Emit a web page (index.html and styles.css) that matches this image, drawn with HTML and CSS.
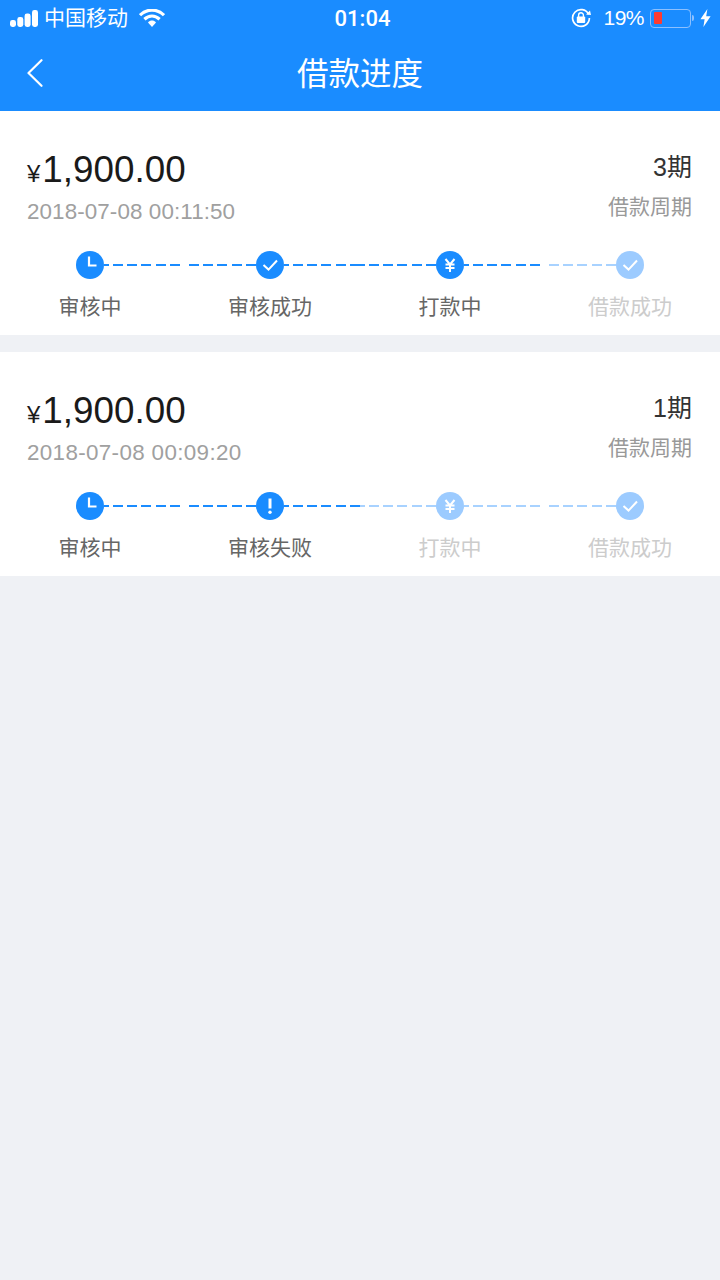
FILE: index.html
```html
<!DOCTYPE html>
<html lang="zh-CN">
<head>
    <meta charset="UTF-8">
    <meta name="viewport" content="width=device-width, initial-scale=1.0">
    <title>借款进度</title>
    <link rel="stylesheet" href="styles.css">
</head>
<body>
    <!-- 顶部蓝色区域 -->
    <header class="top">
        <div class="status-bar">
            <div class="status-left">
                <svg class="signal" width="28" height="17" viewBox="0 0 28 17">
                    <rect x="0" y="10" width="6" height="7" rx="2.4" fill="#fff"/>
                    <rect x="7.3" y="7" width="6" height="10" rx="2.4" fill="#fff"/>
                    <rect x="14.6" y="3.5" width="6" height="13.5" rx="2.4" fill="#fff"/>
                    <rect x="22" y="0" width="6" height="17" rx="2.4" fill="#fff"/>
                </svg>
                <span class="carrier">中国移动</span>
                <svg class="wifi" width="26" height="18" viewBox="0 0 26 18">
                    <path d="M1 6.2 C8 -0.6 18 -0.6 25 6.2" fill="none" stroke="#fff" stroke-width="3.2"/>
                    <path d="M5.4 10.2 C10 6 16 6 20.6 10.2" fill="none" stroke="#fff" stroke-width="3.2"/>
                    <path d="M9 13.4 C11.4 11 14.6 11 17 13.4 L13 18 Z" fill="#fff"/>
                </svg>
            </div>
            <div class="status-time">01:04</div>
            <div class="status-right">
                <svg class="rotate-lock" width="20" height="20" viewBox="0 0 20 20">
                    <path d="M17.6 6.4 A8.4 8.4 0 1 0 18.4 10" fill="none" stroke="#fff" stroke-width="1.7"/>
                    <path d="M15 6.6 L20 7 L19 2.6 Z" fill="#fff"/>
                    <rect x="5.8" y="8.6" width="8.4" height="6.4" rx="1" fill="#fff"/>
                    <path d="M7.6 9 V7.2 A2.4 2.4 0 0 1 12.4 7.2 V9" fill="none" stroke="#fff" stroke-width="1.4"/>
                </svg>
                <span class="percent">19%</span>
                <div class="battery">
                    <div class="battery-body"><div class="battery-level"></div></div>
                    <div class="battery-tip"></div>
                </div>
                <svg class="bolt" width="11" height="18" viewBox="0 0 11 18">
                    <path d="M7.4 0 L0.4 10.2 H4.6 L3.4 18 L10.6 7.2 H6.2 Z" fill="#fff"/>
                </svg>
            </div>
        </div>
        <nav class="nav">
            <svg class="back" width="16" height="28" viewBox="0 0 16 28">
                <path d="M14.5 1.2 L1.5 14 L14.5 26.8" fill="none" stroke="#fff" stroke-width="2.2" stroke-linecap="round" stroke-linejoin="round"/>
            </svg>
            <h1>借款进度</h1>
        </nav>
    </header>

    <!-- 第一笔 -->
    <section class="card">
        <div class="card-head">
            <div>
                <div class="amount"><span class="yen">¥</span>1,900.00</div>
                <div class="date">2018-07-08 00:11:50</div>
            </div>
            <div class="period">
                <div class="period-num">3期</div>
                <div class="period-label">借款周期</div>
            </div>
        </div>
        <div class="track">
            <svg class="node" viewBox="0 0 28 28"><circle cx="14" cy="14" r="14" fill="#1a8cff"/><path d="M13 5.5 V14.5 H20.5" fill="none" stroke="#fff" stroke-width="2.2"/></svg>
            <div class="link"><i class="dash"></i><i class="dash"></i></div>
            <svg class="node" viewBox="0 0 28 28"><circle cx="14" cy="14" r="14" fill="#1a8cff"/><path d="M7.5 14 L12.5 18.6 L21 9.5" fill="none" stroke="#fff" stroke-width="2"/></svg>
            <div class="link tight"><i class="dash"></i><i class="dash"></i></div>
            <svg class="node" viewBox="0 0 28 28"><circle cx="14" cy="14" r="14" fill="#1a8cff"/><path d="M9.5 8 L14 13.5 L18.5 8 M9.5 13.5 H18.5 M9.5 17 H18.5 M14 13.5 V21" fill="none" stroke="#fff" stroke-width="2"/></svg>
            <div class="link"><i class="dash"></i><i class="dash off"></i></div>
            <svg class="node" viewBox="0 0 28 28"><circle cx="14" cy="14" r="14" fill="#9ccbff"/><path d="M7.5 14 L12.5 18.6 L21 9.5" fill="none" stroke="#fff" stroke-width="2"/></svg>
        </div>
        <div class="labels">
            <span>审核中</span>
            <span>审核成功</span>
            <span>打款中</span>
            <span class="off">借款成功</span>
        </div>
    </section>

    <!-- 第二笔 -->
    <section class="card">
        <div class="card-head">
            <div>
                <div class="amount"><span class="yen">¥</span>1,900.00</div>
                <div class="date wide">2018-07-08 00:09:20</div>
            </div>
            <div class="period">
                <div class="period-num">1期</div>
                <div class="period-label">借款周期</div>
            </div>
        </div>
        <div class="track">
            <svg class="node" viewBox="0 0 28 28"><circle cx="14" cy="14" r="14" fill="#1a8cff"/><path d="M13 5.5 V14.5 H20.5" fill="none" stroke="#fff" stroke-width="2.2"/></svg>
            <div class="link"><i class="dash"></i><i class="dash"></i></div>
            <svg class="node" viewBox="0 0 28 28"><circle cx="14" cy="14" r="14" fill="#1a8cff"/><path d="M14 6.5 V16.5" fill="none" stroke="#fff" stroke-width="3"/><circle cx="14" cy="20.2" r="1.7" fill="#fff"/></svg>
            <div class="link tight"><i class="dash"></i><i class="dash off"></i></div>
            <svg class="node" viewBox="0 0 28 28"><circle cx="14" cy="14" r="14" fill="#9ccbff"/><path d="M9.5 8 L14 13.5 L18.5 8 M9.5 13.5 H18.5 M9.5 17 H18.5 M14 13.5 V21" fill="none" stroke="#fff" stroke-width="2"/></svg>
            <div class="link"><i class="dash off"></i><i class="dash off"></i></div>
            <svg class="node" viewBox="0 0 28 28"><circle cx="14" cy="14" r="14" fill="#9ccbff"/><path d="M7.5 14 L12.5 18.6 L21 9.5" fill="none" stroke="#fff" stroke-width="2"/></svg>
        </div>
        <div class="labels">
            <span>审核中</span>
            <span>审核失败</span>
            <span class="off">打款中</span>
            <span class="off">借款成功</span>
        </div>
    </section>
</body>
</html>
```

FILE: styles.css
```css
/* Reset */
html, body {
    margin: 0;
    padding: 0;
}

body {
    width: 720px;
    min-height: 1280px;
    background: #eff1f5;
    font-family: "Liberation Sans", "Noto Sans CJK SC", sans-serif;
    color: #1a1a1a;
}

/* Header */
.top {
    height: 111px;
    background: #1a8cff;
    color: #fff;
}

.status-bar {
    height: 38px;
    display: flex;
    align-items: center;
    justify-content: space-between;
    padding: 0 9px 2px 10px;
    box-sizing: border-box;
    font-size: 21px;
}

.status-left,
.status-right {
    flex: 1;
    display: flex;
    align-items: center;
}

.carrier {
    margin: -4px 0 0 6px;
}

.wifi {
    margin-left: 11px;
}

.status-time {
    margin-left: 4px;
    font-family: Roboto, "Liberation Sans", sans-serif;
    font-weight: 500;
    font-size: 22px;
}

.status-right {
    justify-content: flex-end;
}

.percent {
    margin-left: 12px;
    font-size: 21px;
    letter-spacing: -0.5px;
}

.battery {
    display: flex;
    align-items: center;
    margin-left: 6px;
}

.battery-body {
    width: 41px;
    height: 19px;
    padding: 2.5px;
    box-sizing: border-box;
    border: 1.5px solid #8cc0ff;
    border-radius: 4px;
}

.battery-level {
    width: 8px;
    height: 100%;
    background: #ff3b30;
    border-radius: 1px;
}

.battery-tip {
    width: 2px;
    height: 6px;
    margin-left: 1px;
    background: #8cc0ff;
    border-radius: 0 2px 2px 0;
}

.bolt {
    margin-left: 6px;
}

/* Nav */
.nav {
    position: relative;
    height: 73px;
    display: flex;
    align-items: center;
    justify-content: center;
}

.nav h1 {
    margin: 0 0 2px;
    font-size: 31.5px;
    font-weight: 400;
    line-height: 70px;
}

.back {
    position: absolute;
    left: 27px;
    top: 21px;
}

/* Card */
.card {
    height: 224px;
    margin-bottom: 17px;
    background: #fff;
    overflow: hidden;
}

.card-head {
    display: flex;
    justify-content: space-between;
    padding: 36px 28px 0 27px;
    height: 104px;
}

.amount {
    margin-top: 1px;
    font-size: 36.8px;
    line-height: 44px;
}

.yen {
    margin-right: 2px;
    font-size: 24px;
}

.date {
    font-size: 22.4px;
    line-height: 32px;
    letter-spacing: 0.1px;
    color: #a0a0a0;
}

.date.wide {
    letter-spacing: 0.35px;
}

.period {
    text-align: right;
}

.period-num {
    font-size: 25px;
    line-height: 40px;
    color: #333;
}

.period-label {
    margin-top: 4px;
    font-size: 21px;
    line-height: 32px;
    color: #999;
}

/* Progress */
.track {
    display: flex;
    align-items: center;
    padding: 0 76px;
}

.node {
    width: 28px;
    height: 28px;
    flex: none;
}

.link {
    flex: 1;
    display: flex;
    gap: 7px;
}

.link.tight {
    gap: 0;
}

.dash {
    flex: 1;
    height: 2px;
    background: repeating-linear-gradient(270deg, #1a8cff 0, #1a8cff 10px, transparent 10px, transparent 14.3px);
}

.dash:first-child {
    flex: none;
    width: 76px;
}

.dash.off {
    background-image: repeating-linear-gradient(270deg, #a8d2ff 0, #a8d2ff 10px, transparent 10px, transparent 14.3px);
}

.labels {
    display: grid;
    grid-template-columns: repeat(4, 180px);
    margin-top: 12px;
    font-size: 21px;
    line-height: 32px;
    text-align: center;
    color: #666;
}

.labels .off {
    color: #ccc;
}
```
